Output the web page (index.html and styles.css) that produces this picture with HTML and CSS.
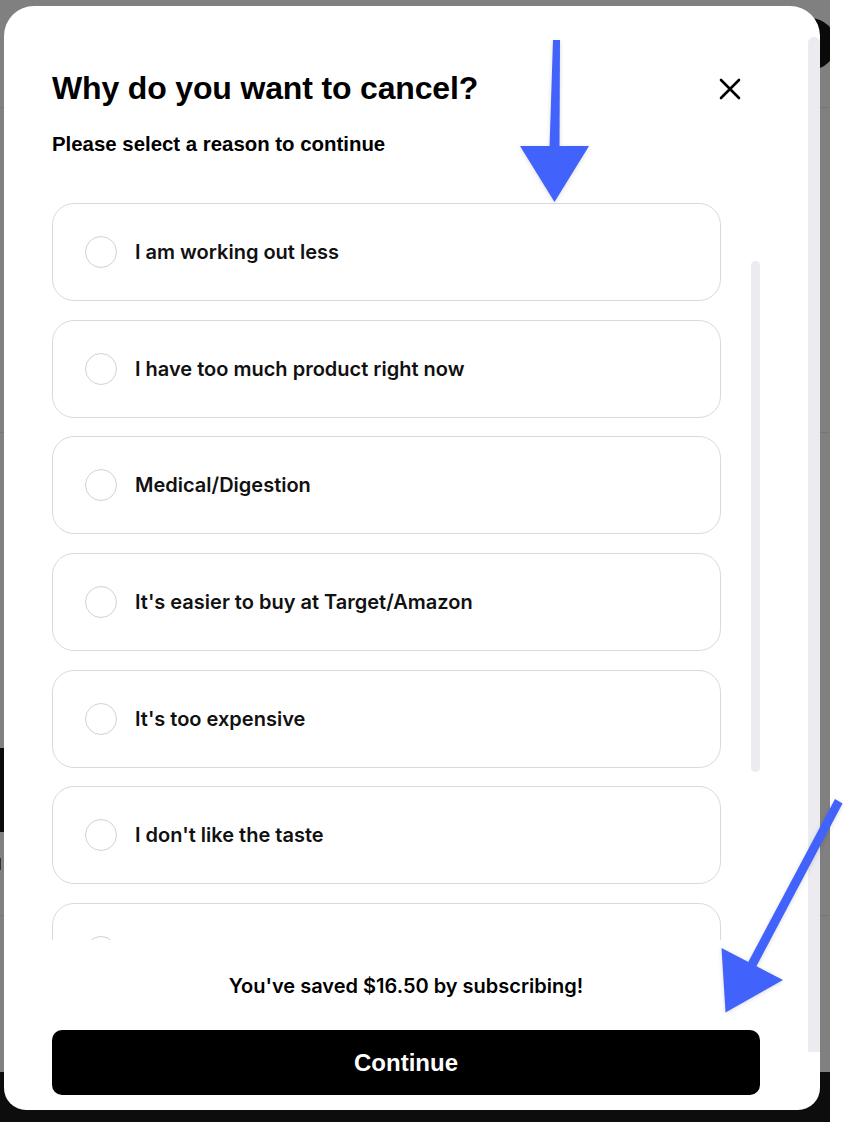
FILE: index.html
```html
<!doctype html>
<html lang="en">
  <head>
    <meta charset="utf-8">
    <meta name="viewport" content="width=device-width, initial-scale=1">
    <title>Cancel subscription</title>
    <link rel="stylesheet" href="styles.css">
  </head>
  <body>
    <!-- page behind the overlay -->
    <div class="page">
      <div class="page-main">
        <div class="page-header">
          <span class="avatar"></span>
        </div>
        <div class="page-body">
          <div class="page-row"></div>
          <div class="page-row page-row-tall">
            <span class="page-block"></span>
            <span class="page-mark"></span>
          </div>
        </div>
        <div class="page-footer"></div>
      </div>
      <div class="page-gutter"></div>
    </div>

    <div class="modal" role="dialog" aria-labelledby="cancel-title">
      <div class="modal-content">
        <header class="modal-header">
          <h1 id="cancel-title">Why do you want to cancel?</h1>
          <button class="close" aria-label="Close">
            <svg width="22" height="22" viewBox="0 0 22 22"><path d="M2 2 L20 20 M20 2 L2 20" stroke="#000" stroke-width="2.6" stroke-linecap="round" fill="none"/></svg>
          </button>
        </header>
        <p class="subtitle">Please select a reason to continue</p>

        <div class="reasons-wrap">
          <ul class="reasons">
            <li class="reason"><span class="radio"></span>I am working out less</li>
            <li class="reason"><span class="radio"></span>I have too much product right now</li>
            <li class="reason"><span class="radio"></span>Medical/Digestion</li>
            <li class="reason"><span class="radio"></span>It's easier to buy at Target/Amazon</li>
            <li class="reason"><span class="radio"></span>It's too expensive</li>
            <li class="reason"><span class="radio"></span>I don't like the taste</li>
            <li class="reason"><span class="radio"></span></li>
          </ul>
          <div class="reasons-scroll"><span class="thumb"></span></div>
        </div>

        <footer class="modal-footer">
          <p class="saved">You've saved $16.50 by subscribing!</p>
          <button class="continue">Continue</button>
        </footer>
      </div>
      <div class="modal-scroll"><span class="thumb thumb-outer"></span></div>
    </div>

    <!-- annotation arrows drawn over the screenshot -->
    <svg class="arrows" width="857" height="1122" viewBox="0 0 857 1122">
      <g fill="#4263fb">
        <polygon points="553,40 560,40 559.5,148 549.5,148"/>
        <polygon points="520,146 589,146 554.5,202"/>
        <polygon points="835,799 842.5,803.5 756,967 748,962.5"/>
        <polygon points="721.5,948 783,980 725.5,1012.5"/>
      </g>
    </svg>
  </body>
</html>
```

FILE: styles.css
```css
html {
  margin: 0;
}

body {
  margin: 0;
  width: 857px;
  height: 1122px;
  overflow: hidden;
  position: relative;
  font-family: "Liberation Sans", Arial, sans-serif;
  color: #000;
  -webkit-font-smoothing: antialiased;
}

/* ---- page behind the overlay ---- */
.page {
  display: flex;
  height: 100%;
}

.page-main {
  width: 830px;
  display: flex;
  flex-direction: column;
  background-color: #808080;
  overflow: hidden;
}

.page-gutter {
  flex: 1;
  background-color: #fff;
}

.page-header {
  height: 108px;
  border-bottom: 1px solid #777;
  display: flex;
  justify-content: flex-end;
  box-sizing: border-box;
}

.avatar {
  width: 52px;
  height: 52px;
  margin-top: 18px;
  margin-right: -6px;
  border-radius: 50%;
  background-color: #0a0a0a;
}

.page-body {
  flex: 1;
  display: flex;
  flex-direction: column;
}

.page-row {
  height: 324px;
  border-bottom: 1px solid #777;
}

.page-row-tall {
  height: 483px;
  display: flex;
  flex-direction: column;
  padding-top: 315px;
  box-sizing: border-box;
}

.page-block {
  width: 40px;
  height: 84px;
  background-color: #0a0a0a;
}

.page-mark {
  width: 3px;
  height: 12px;
  margin-top: 26px;
  border-left: 1.5px solid #333;
}

.page-footer {
  height: 50px;
  background-color: #0d0d0d;
}

/* ---- modal ---- */
.modal {
  position: absolute;
  top: 6px;
  left: 4px;
  width: 816px;
  height: 1104px;
  display: flex;
  background-color: #fff;
  border-radius: 30px 30px 22px 22px;
  overflow: hidden;
}

.modal-content {
  flex: 1;
  display: flex;
  flex-direction: column;
  padding: 62px 48px 15px 48px;
}

.modal-scroll {
  width: 12px;
  padding-top: 31px;
  padding-bottom: 58px;
  display: flex;
}

.thumb {
  display: block;
  width: 100%;
  background-color: #ebebf0;
  border-radius: 6px;
}

.thumb-outer {
  border-radius: 6px 6px 0 0;
}

.modal-header {
  display: flex;
  justify-content: space-between;
  align-items: center;
}

.modal-header h1 {
  margin: 0;
  font-size: 32px;
  line-height: 40px;
  font-weight: bold;
  letter-spacing: -0.005em;
}

.close {
  margin: 2px 19px 0 0;
  padding: 0;
  border: 0;
  background: none;
  display: flex;
}

.subtitle {
  margin: 24px 0 0;
  font-size: 20.4px;
  line-height: 24px;
  font-weight: bold;
}

.reasons-wrap {
  margin-top: 24px;
  height: 760px;
  display: flex;
  gap: 30px;
  overflow: hidden;
}

.reasons {
  list-style: none;
  margin: 0;
  padding: 23px 0 0;
  width: 669px;
  display: flex;
  flex-direction: column;
  gap: 18.7px;
}

.reason {
  flex: none;
  height: 98px;
  box-sizing: border-box;
  border: 1px solid #dadade;
  border-radius: 22px;
  padding: 0 32px;
  display: flex;
  align-items: center;
  gap: 18px;
  font-family: Inter, "Noto Sans", sans-serif;
  font-weight: 600;
  font-size: 20px;
  color: #111;
}

.radio {
  width: 32px;
  height: 32px;
  box-sizing: border-box;
  border: 1.5px solid #d2d2d6;
  border-radius: 50%;
}

.reasons-scroll {
  width: 9px;
  padding-top: 81px;
  height: 511px;
  display: flex;
  flex-direction: column;
}

.reasons-scroll .thumb {
  flex: 1;
  border-radius: 5px;
}

.modal-footer {
  display: flex;
  flex-direction: column;
  align-items: stretch;
}

.saved {
  margin: 34px 0 0;
  text-align: center;
  font-family: Inter, "Noto Sans", sans-serif;
  font-weight: 600;
  font-size: 20px;
  line-height: 24px;
}

.continue {
  margin-top: 32px;
  height: 65px;
  border: 0;
  border-radius: 10px;
  background-color: #000;
  color: #fff;
  font-family: "Liberation Sans", Arial, sans-serif;
  font-weight: bold;
  font-size: 24px;
}

/* ---- annotation ---- */
.arrows {
  position: absolute;
  top: 0;
  left: 0;
  pointer-events: none;
  filter: drop-shadow(0 1px 2px rgba(0, 0, 0, 0.15));
}
```
